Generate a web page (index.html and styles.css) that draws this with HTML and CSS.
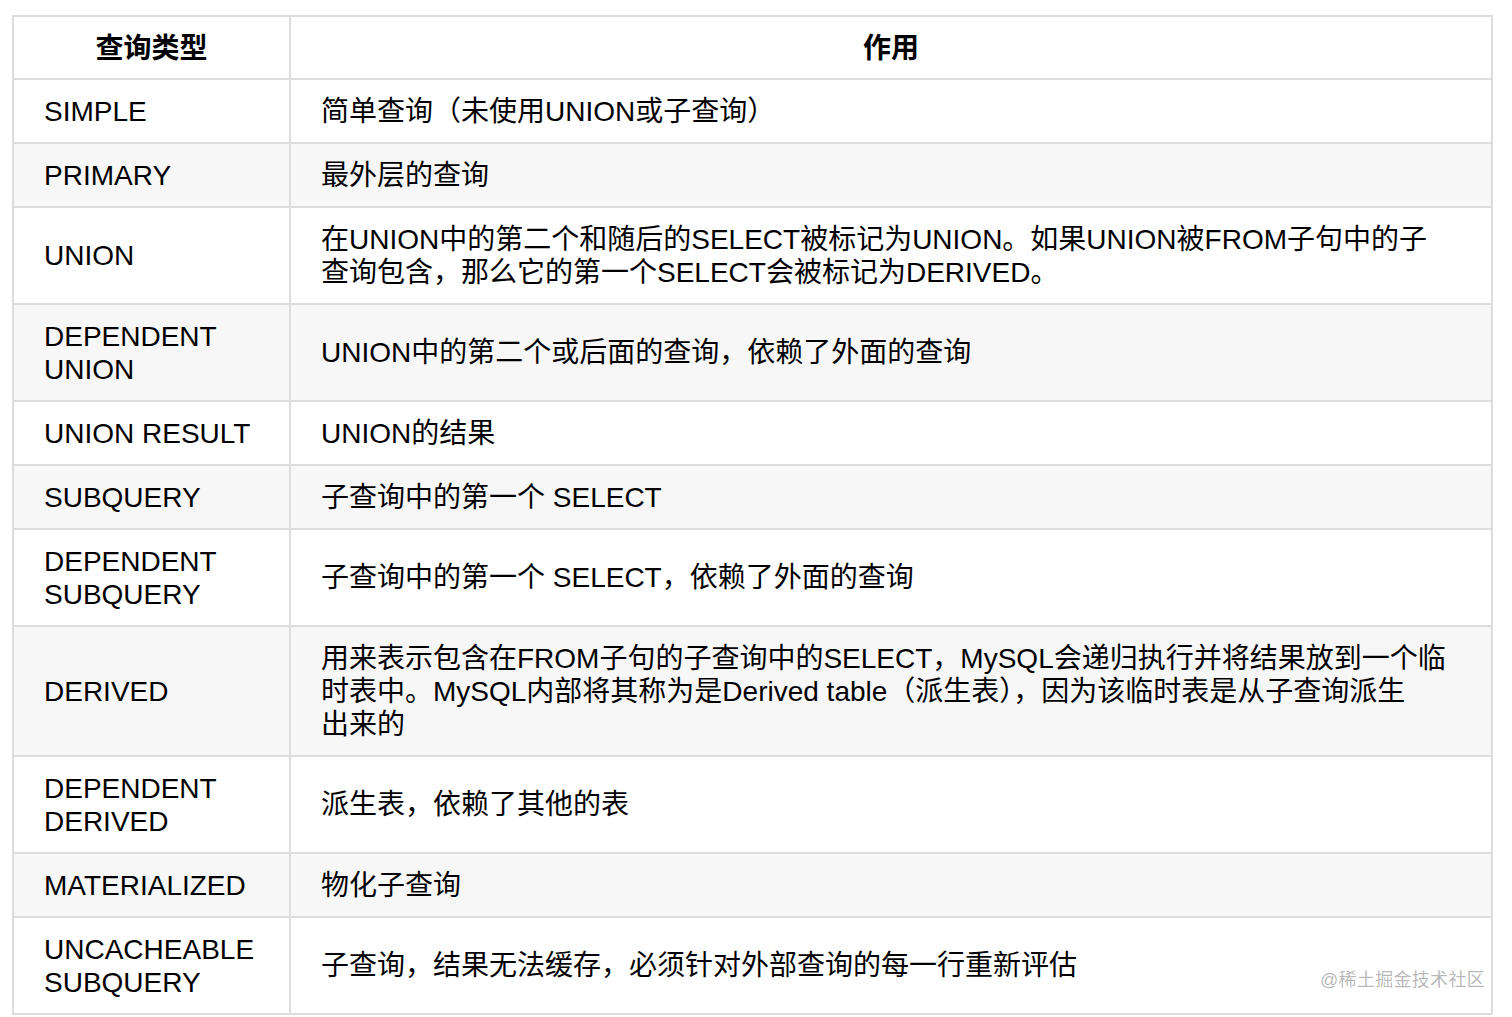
FILE: index.html
```html
<!DOCTYPE html>
<html lang="zh-CN">
<head>
<meta charset="utf-8">
<title>查询类型</title>
<link rel="stylesheet" href="styles.css">
</head>
<body>
<div class="page">
<table class="types">
  <colgroup>
    <col class="col-type">
    <col class="col-desc">
  </colgroup>
  <thead>
    <tr><th>查询类型</th><th>作用</th></tr>
  </thead>
  <tbody>
    <tr><td>SIMPLE</td><td>简单查询（未使用UNION或子查询）</td></tr>
    <tr><td>PRIMARY</td><td>最外层的查询</td></tr>
    <tr><td>UNION</td><td>在UNION中的第二个和随后的SELECT被标记为UNION。如果UNION被FROM子句中的子<br>查询包含，那么它的第一个SELECT会被标记为DERIVED。</td></tr>
    <tr><td>DEPENDENT UNION</td><td>UNION中的第二个或后面的查询，依赖了外面的查询</td></tr>
    <tr><td>UNION RESULT</td><td>UNION的结果</td></tr>
    <tr><td>SUBQUERY</td><td>子查询中的第一个 SELECT</td></tr>
    <tr><td>DEPENDENT SUBQUERY</td><td>子查询中的第一个 SELECT，依赖了外面的查询</td></tr>
    <tr><td>DERIVED</td><td>用来表示包含在FROM子句的子查询中的SELECT，MySQL会递归执行并将结果放到一个临<br>时表中。MySQL内部将其称为是Derived table（派生表），因为该临时表是从子查询派生<br>出来的</td></tr>
    <tr><td>DEPENDENT DERIVED</td><td>派生表，依赖了其他的表</td></tr>
    <tr><td>MATERIALIZED</td><td>物化子查询</td></tr>
    <tr><td>UNCACHEABLE SUBQUERY</td><td>子查询，结果无法缓存，必须针对外部查询的每一行重新评估</td></tr>
  </tbody>
</table>
<div class="watermark">@稀土掘金技术社区</div>
</div>
</body>
</html>
```

FILE: styles.css
```css
html, body {
  margin: 0;
  padding: 0;
  background: #ffffff;
}

body {
  font-family: "Liberation Sans", "Noto Sans CJK SC", sans-serif;
  color: #000000;
  overflow: hidden;
}

.page {
  position: relative;
  padding: 15px 0 0 12px;
}

.types {
  border-collapse: collapse;
  table-layout: fixed;
  width: 1481px;
  font-size: 28px;
  line-height: 33px;
}

.col-type {
  width: 277px;
}

.types th,
.types td {
  border: 2px solid #dddddd;
  padding: 14.5px 30px 14.5px 30px;
  vertical-align: middle;
  text-align: left;
}

.types th {
  font-weight: bold;
  text-align: center;
  padding-top: 15px;
  padding-bottom: 13px;
}

.types tbody tr:nth-child(2n) {
  background: #f7f7f7;
}

.watermark {
  position: absolute;
  right: 27px;
  top: 968px;
  font-size: 18px;
  line-height: 24px;
  color: rgba(0, 0, 0, 0.3);
  letter-spacing: 0.3px;
}
```
